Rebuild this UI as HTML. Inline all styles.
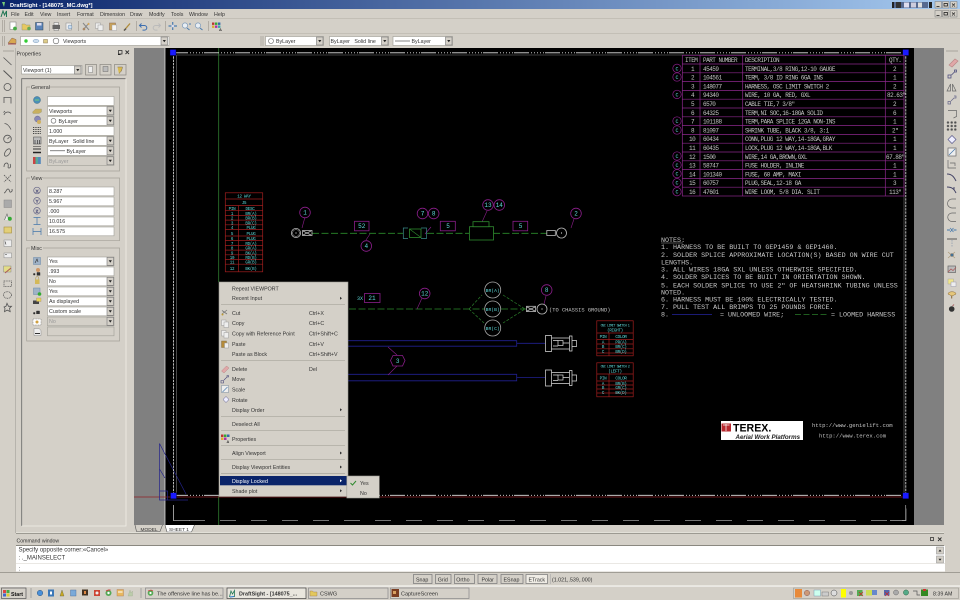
<!DOCTYPE html>
<html><head><meta charset="utf-8"><title>DraftSight</title>
<style>
html,body{margin:0;padding:0;width:960px;height:600px;overflow:hidden;background:#d4d0c8}
svg{position:absolute;left:0;top:0;display:block;filter:blur(.35px)}
text{font-family:"Liberation Sans",sans-serif;font-size:5.3px;fill:#333;white-space:pre}
.b{font-weight:bold}
.t{font-family:"Liberation Mono",monospace;font-size:6px;letter-spacing:-.5px;fill:#c4c4c4}
.n{font-family:"Liberation Mono",monospace;font-size:6.7px;fill:#c8c8c8}
.c{font-family:"Liberation Mono",monospace;font-size:4.2px;letter-spacing:-.25px;fill:#5fd8d8;text-anchor:middle}
.h{font-size:3.5px;letter-spacing:-.5px}
.bn{font-family:"Liberation Mono",monospace;font-size:6px;fill:#5fd8d8;text-anchor:middle}
.dis{fill:#999}
</style></head><body>
<svg width="960" height="600" viewBox="0 0 960 600" xmlns="http://www.w3.org/2000/svg">
<defs>
<linearGradient id="tg" x1="0" x2="1" y1="0" y2="0"><stop offset="0" stop-color="#0a246a"/><stop offset="1" stop-color="#a6caf0"/></linearGradient>
<g id="dd"><rect width="6.5" height="8" fill="#d4d0c8" stroke="#777" stroke-width=".6"/><path d="M1.7 3h3.2L3.3 5.3z" fill="#222"/></g>
<g id="wb"><rect width="6.5" height="6.5" fill="#d4d0c8" stroke="#777" stroke-width=".5"/></g>
<g id="bal"><circle r="5.3" fill="#000" stroke="#8a1e8a" stroke-width=".8"/></g>
<g id="c"><circle r="4.2" fill="none" stroke="#8a1e8a" stroke-width=".7"/><text y="2" class="bn" style="font-size:5px">C</text></g>
</defs>

<!-- base -->
<rect width="960" height="600" fill="#d4d0c8"/>
<!-- title bar -->
<rect width="960" height="9" fill="url(#tg)"/>
<path d="M2 2h3l-1 5z" fill="#7c7"/>
<text x="10" y="6.8" class="b" style="fill:#fff;font-size:5.7px">DraftSight - [148075_MC.dwg*]</text>
<rect x="892" y="2" width="36" height="6" fill="#56698f"/>
<rect x="892" y="2" width="2" height="6" fill="#222"/><rect x="896" y="2" width="5" height="6" fill="#333"/><rect x="904" y="2.5" width="5" height="5" fill="#dde"/><rect x="911" y="2.5" width="5" height="5" fill="#ccd"/><rect x="918" y="2.5" width="4" height="5" fill="#ddd"/><rect x="929" y="2" width="3" height="6" fill="#222"/>
<use href="#wb" x="935" y="1.5"/><use href="#wb" x="942.5" y="1.5"/><use href="#wb" x="950.5" y="1.5"/>
<path d="M936.5 6.5h3M944 3.5h3.5v2.5h-3.5zM952 3.5l3 3M955 3.5l-3 3" stroke="#111" stroke-width=".7" fill="none"/>
<!-- menu -->
<path d="M1 17l2-6 1.5 4 2-4v6" stroke="#275" fill="none"/>
<g style="font-size:5.3px">
<text x="11" y="16">File</text><text x="24.5" y="16">Edit</text><text x="40" y="16">View</text><text x="57" y="16">Insert</text><text x="77" y="16">Format</text><text x="100" y="16">Dimension</text><text x="130" y="16">Draw</text><text x="149" y="16">Modify</text><text x="171" y="16">Tools</text><text x="189" y="16">Window</text><text x="214" y="16">Help</text></g>
<use href="#wb" x="935" y="10.5"/><use href="#wb" x="942.5" y="10.5"/><use href="#wb" x="950.5" y="10.5"/>
<path d="M936.5 15.5h3M944 12.5h3.5v2.5h-3.5zM952 12.5l3 3M955 12.5l-3 3" stroke="#111" stroke-width=".7" fill="none"/>
<path d="M0 18.5H960M0 33.5H960" stroke="#bdb9b0" stroke-width=".7"/>
<!-- toolbar 1 -->
<g stroke="#a8a49b" stroke-width=".8"><path d="M2.5 20v12M4.5 20v12M2.5 36v10M4.5 36v10M49.5 21v10M78.5 21v10M136.5 21v10M165.5 21v10M208.5 21v10M261 36v10M263 36v10"/></g>
<rect x="10" y="22" width="6" height="7.5" fill="#fff" stroke="#888" stroke-width=".6"/><circle cx="15" cy="28.5" r="1.9" fill="#4a4"/>
<path d="M22 24h3l1 1h4v5h-8z" fill="#e6c860" stroke="#997" stroke-width=".5"/><circle cx="29" cy="28.5" r="1.8" fill="#6a5"/>
<rect x="35.5" y="22.5" width="7.5" height="7.5" fill="#5b83b8" stroke="#345" stroke-width=".5"/><rect x="37" y="23" width="4.5" height="2.5" fill="#dde"/>
<rect x="52.5" y="25" width="7.5" height="4" fill="#666"/><rect x="54" y="22.5" width="4.5" height="2.5" fill="#eee" stroke="#555" stroke-width=".4"/><rect x="54" y="29" width="4.5" height="1.5" fill="#fff" stroke="#555" stroke-width=".4"/>
<rect x="66" y="23" width="5.5" height="7" fill="#eee" stroke="#888" stroke-width=".5"/><circle cx="70" cy="27" r="2" fill="#cde" stroke="#68a" stroke-width=".5"/>
<path d="M83 30l6-7M83 23l6 7" stroke="#888"/><circle cx="84" cy="29" r="1.3" fill="#a86"/><circle cx="88.5" cy="24" r="1" fill="#da5"/>
<rect x="95.5" y="23" width="5" height="5.5" fill="#eee" stroke="#999" stroke-width=".5"/><rect x="98" y="25" width="5" height="5.5" fill="#eee" stroke="#999" stroke-width=".5"/>
<rect x="109.5" y="23" width="6" height="7" fill="#c9a35b" stroke="#865" stroke-width=".5"/><rect x="112" y="25" width="4.5" height="5.5" fill="#f4f4f4" stroke="#999" stroke-width=".4"/>
<path d="M124 30.5l6-7" stroke="#b08c3b" stroke-width="1.3"/><path d="M124 30.5l2-1.8" stroke="#555" stroke-width="1.4"/>
<path d="M140 25.5h4.5a2.3 2.3 0 0 1 0 4.6h-2M141.5 23.5l-2 2 2 2" fill="none" stroke="#3d6fb0" stroke-width="1"/>
<path d="M160 25.5h-4.5a2.3 2.3 0 0 0 0 4.6h2M158.5 23.5l2 2-2 2" fill="none" stroke="#bbb" stroke-width="1"/>
<path d="M172.7 22v8M168.5 26h8.5" stroke="#4a7cb0" stroke-width="1.2"/><circle cx="172.7" cy="26" r="1.3" fill="#dde"/>
<circle cx="185" cy="25.5" r="2.6" fill="#e8eef4" stroke="#7b98b8" stroke-width=".7"/><path d="M187 28l2.5 2" stroke="#4a7cb0"/><path d="M189 24h2" stroke="#4a7cb0"/>
<circle cx="198" cy="25.5" r="2.6" fill="#e8eef4" stroke="#7b98b8" stroke-width=".7"/><path d="M200 28l2.5 2" stroke="#4a7cb0"/>
<rect x="212" y="22.5" width="2.4" height="2.4" fill="#b33"/><rect x="215" y="22.5" width="2.4" height="2.4" fill="#3a3"/><rect x="218" y="22.5" width="2.4" height="2.4" fill="#36a"/><rect x="212" y="25.5" width="2.4" height="2.4" fill="#da3"/><rect x="215" y="25.5" width="2.4" height="2.4" fill="#a3a"/><rect x="218" y="25.5" width="2.4" height="2.4" fill="#3aa"/><text x="219" y="31" class="b" style="font-size:4px">A</text>
<!-- toolbar 2 -->
<path d="M8 43l4-5 4 1.5v4z" fill="#d8a850" stroke="#865" stroke-width=".5"/><path d="M8 44h8" stroke="#a55" stroke-width="1"/>
<rect x="20.5" y="36.5" width="148.5" height="9" fill="#fff" stroke="#9a9890" stroke-width=".6"/><use href="#dd" x="161" y="37"/>
<circle cx="26" cy="41" r="1.7" fill="#3c3"/><ellipse cx="36" cy="41" rx="3" ry="1.6" fill="#cde" stroke="#79b" stroke-width=".5"/><rect x="43.5" y="39.5" width="4" height="3.5" fill="#dc8" stroke="#875" stroke-width=".5"/><circle cx="56" cy="41" r="2.8" fill="#fff" stroke="#666" stroke-width=".6"/><text x="63" y="43">Viewports</text>
<rect x="265.5" y="36.5" width="58" height="9" fill="#fff" stroke="#9a9890" stroke-width=".6"/><use href="#dd" x="316.5" y="37"/><circle cx="271" cy="41" r="2.5" fill="#fff" stroke="#666" stroke-width=".6"/><text x="276" y="43">ByLayer</text>
<rect x="329.5" y="36.5" width="59" height="9" fill="#fff" stroke="#9a9890" stroke-width=".6"/><use href="#dd" x="381.5" y="37"/><text x="330.5" y="43">ByLayer   Solid line</text>
<rect x="393" y="36.5" width="59.5" height="9" fill="#fff" stroke="#9a9890" stroke-width=".6"/><use href="#dd" x="445.5" y="37"/><path d="M395 41h15" stroke="#333" stroke-width=".6"/><text x="411.5" y="43">ByLayer</text>

<!-- canvas -->
<rect x="134" y="48" width="810" height="477" fill="#808080"/>
<rect x="165" y="48" width="749" height="477" fill="#000"/>
<path d="M165 48V525" stroke="#eee" stroke-width=".7"/>

<!-- sheet dashed frame -->
<path d="M173.5 505V520.5H906V505" fill="none" stroke="#9a9a9a" stroke-width=".7" stroke-dasharray="16 15"/>
<path d="M173.5 505V520.5H190" fill="none" stroke="#aaa" stroke-width=".7"/><path d="M890 520.5H905.7V505" fill="none" stroke="#aaa" stroke-width=".7"/>
<path d="M176.3 55H904M176.3 55V495M904 55V495" fill="none" stroke="#7a7a7a" stroke-width=".6"/>
<!-- axes -->
<path d="M218.7 48V282M218.7 496V525" stroke="#2f7c2f" stroke-width=".8"/>
<path d="M134 497H349M380 497H905" stroke="#8f2226" stroke-width=".8"/>
<!-- blue triangle -->
<path d="M159.5 443.5L186 494M159.5 443.5V500H188M159.5 469l5.5 9M159.5 491h8v9" fill="none" stroke="#24248c" stroke-width=".7"/>
<!-- viewport border -->
<g fill="none" stroke="#e4e4e4" stroke-width=".8">
<path d="M173.5 53V495" stroke-dasharray="2.4 .9"/>
<path d="M905.8 53V495" stroke-dasharray="2.4 .9"/>
<path d="M173 52.8H906" stroke-dasharray="15 2 1 2 1 2 1 2 1 2 1 1"/>
<path d="M173 495.3H906" stroke-dasharray="15 2 1 2 1 2 1 2 1 2 1 1"/>
</g>
<g fill="#1a1aff" stroke="#000034" stroke-width=".4"><rect x="170" y="49.5" width="6" height="6"/><rect x="902.7" y="49.5" width="6" height="6"/><rect x="170.5" y="492.7" width="6" height="6"/><rect x="902.7" y="492.7" width="6" height="6"/></g>

<!-- BOM table -->
<g fill="none" stroke="#8c288c" stroke-width=".7">
<rect x="682.3" y="55.3" width="221.7" height="140.7"/>
<path d="M700 55.3V196M742.7 55.3V196M885.3 55.3V196"/>
<path d="M682.3 64H904M682.3 72.8H904M682.3 81.6H904M682.3 90.4H904M682.3 99.2H904M682.3 108H904M682.3 116.8H904M682.3 125.6H904M682.3 134.4H904M682.3 143.2H904M682.3 152H904M682.3 160.8H904M682.3 169.6H904M682.3 178.4H904M682.3 187.2H904"/>
</g>
<use href="#c" x="677" y="68.3"/><use href="#c" x="677" y="77"/><use href="#c" x="677" y="94.4"/><use href="#c" x="677" y="121"/><use href="#c" x="677" y="130"/><use href="#c" x="677" y="156"/><use href="#c" x="677" y="165"/><use href="#c" x="677" y="173.7"/><use href="#c" x="677" y="182.7"/><use href="#c" x="677" y="191.7"/>
<g>
<text class="t" x="685" y="62">ITEM</text><text class="t" x="703" y="62">PART NUMBER</text><text class="t" x="745" y="62">DESCRIPTION</text><text class="t" x="889" y="62">QTY.</text>
<text class="t" x="691" y="70.8">1</text><text class="t" x="703" y="70.8">45459</text><text class="t" x="745" y="70.8">TERMINAL,3/8 RING,12-10 GAUGE</text><text class="t" x="893" y="70.8">2</text>
<text class="t" x="691" y="79.6">2</text><text class="t" x="703" y="79.6">104561</text><text class="t" x="745" y="79.6">TERM, 3/8 ID RING 6GA INS</text><text class="t" x="893" y="79.6">1</text>
<text class="t" x="691" y="88.4">3</text><text class="t" x="703" y="88.4">148077</text><text class="t" x="745" y="88.4">HARNESS, OSC LIMIT SWITCH 2</text><text class="t" x="893" y="88.4">2</text>
<text class="t" x="691" y="97.2">4</text><text class="t" x="703" y="97.2">94340</text><text class="t" x="745" y="97.2">WIRE, 10 GA, RED, GXL</text><text class="t" x="887" y="97.2">82.63"</text>
<text class="t" x="691" y="106">5</text><text class="t" x="703" y="106">6570</text><text class="t" x="745" y="106">CABLE TIE,7 3/8"</text><text class="t" x="893" y="106">2</text>
<text class="t" x="691" y="114.8">6</text><text class="t" x="703" y="114.8">64325</text><text class="t" x="745" y="114.8">TERM,NI SOC,16-18GA SOLID</text><text class="t" x="893" y="114.8">6</text>
<text class="t" x="691" y="123.6">7</text><text class="t" x="703" y="123.6">101188</text><text class="t" x="745" y="123.6">TERM,PARA SPLICE 12GA NON-INS</text><text class="t" x="893" y="123.6">1</text>
<text class="t" x="691" y="132.4">8</text><text class="t" x="703" y="132.4">81097</text><text class="t" x="745" y="132.4">SHRINK TUBE, BLACK 3/8, 3:1</text><text class="t" x="892" y="132.4">2"</text>
<text class="t" x="689" y="141.2">10</text><text class="t" x="703" y="141.2">60434</text><text class="t" x="745" y="141.2">CONN,PLUG 12 WAY,14-18GA,GRAY</text><text class="t" x="893" y="141.2">1</text>
<text class="t" x="689" y="150">11</text><text class="t" x="703" y="150">60435</text><text class="t" x="745" y="150">LOCK,PLUG 12 WAY,14-18GA,BLK</text><text class="t" x="893" y="150">1</text>
<text class="t" x="689" y="158.8">12</text><text class="t" x="703" y="158.8">1500</text><text class="t" x="745" y="158.8">WIRE,14 GA,BROWN,GXL</text><text class="t" x="886" y="158.8">67.88"</text>
<text class="t" x="689" y="167.6">13</text><text class="t" x="703" y="167.6">58747</text><text class="t" x="745" y="167.6">FUSE HOLDER, INLINE</text><text class="t" x="893" y="167.6">1</text>
<text class="t" x="689" y="176.4">14</text><text class="t" x="703" y="176.4">101340</text><text class="t" x="745" y="176.4">FUSE, 60 AMP, MAXI</text><text class="t" x="893" y="176.4">1</text>
<text class="t" x="689" y="185.2">15</text><text class="t" x="703" y="185.2">60757</text><text class="t" x="745" y="185.2">PLUG,SEAL,12-18 GA</text><text class="t" x="893" y="185.2">3</text>
<text class="t" x="689" y="194">16</text><text class="t" x="703" y="194">47601</text><text class="t" x="745" y="194">WIRE LOOM, 5/8 DIA. SLIT</text><text class="t" x="889" y="194">113"</text>
</g>

<!-- Notes -->
<text class="n" x="661" y="242">NOTES:</text><path d="M661 243H683" stroke="#ccc" stroke-width=".4"/>
<text class="n" x="661" y="249">1. HARNESS TO BE BUILT TO GEP1459 &amp; GEP1460.</text>
<text class="n" x="661" y="257">2. SOLDER SPLICE APPROXIMATE LOCATION(S) BASED ON WIRE CUT</text>
<text class="n" x="661" y="264.5">LENGTHS.</text>
<text class="n" x="661" y="271.5">3. ALL WIRES 18GA SXL UNLESS OTHERWISE SPECIFIED.</text>
<text class="n" x="661" y="279">4. SOLDER SPLICES TO BE BUILT IN ORIENTATION SHOWN.</text>
<text class="n" x="661" y="287.5">5. EACH SOLDER SPLICE TO USE 2" OF HEATSHRINK TUBING UNLESS</text>
<text class="n" x="661" y="294.5">NOTED.</text>
<text class="n" x="661" y="301.5">6. HARNESS MUST BE 100% ELECTRICALLY TESTED.</text>
<text class="n" x="661" y="309">7. PULL TEST ALL BRIMPS TO 25 POUNDS FORCE.</text>
<text class="n" x="661" y="316.5">8.</text><path d="M672 314.5H712" stroke="#24249c" stroke-width=".8"/>
<text class="n" x="720" y="316.5">= UNLOOMED WIRE;</text><path d="M795 314.5H827" stroke="#2a7c2a" stroke-width=".8" stroke-dasharray="6 2.5"/>
<text class="n" x="831" y="316.5">= LOOMED HARNESS</text>

<!-- Terex -->
<rect x="721" y="421" width="82" height="19" fill="#fff"/>
<rect x="721.5" y="423.5" width="9.5" height="8" fill="#b7282e"/><path d="M723 425h6.5M726 424v7" stroke="#fff" stroke-width=".7"/>
<text x="733" y="431.5" class="b" style="font-size:10.6px;fill:#000">TEREX.</text>
<text x="735.5" y="438.8" class="b" style="font-size:6.2px;fill:#222;font-style:italic">Aerial Work Platforms</text>
<text class="t" x="812" y="427" style="font-size:5.6px;letter-spacing:0">http://www.genielift.com</text>
<text class="t" x="819" y="437.5" style="font-size:5.6px;letter-spacing:0">http://www.terex.com</text>

<!-- J5 table -->
<g fill="none" stroke="#a01e1e" stroke-width=".7">
<rect x="225.3" y="192.8" width="37.4" height="79"/>
<path d="M225.3 199H262.7M225.3 205.5H262.7M225.3 210.7H262.7M225.3 215.4H262.7M225.3 220.1H262.7M225.3 224.8H262.7M225.3 229.5H262.7M225.3 236H262.7M225.3 240.5H262.7M225.3 245.4H262.7M225.3 250.1H262.7M225.3 254.8H262.7M225.3 259.5H262.7M225.3 264.2H262.7M238.5 205.5V271.8"/>
</g>
<text class="c" x="244" y="197.5">12 WAY</text><text class="c" x="244" y="204">J5</text>
<text class="c" x="232" y="210">PIN</text><text class="c" x="250" y="210">DESC</text>
<g>
<text class="c" x="232" y="215">1</text><text class="c" x="251" y="215">BR(A)</text>
<text class="c" x="232" y="219.6">2</text><text class="c" x="251" y="219.6">BR(B)</text>
<text class="c" x="232" y="224.3">3</text><text class="c" x="251" y="224.3">BR(C)</text>
<text class="c" x="232" y="229">4</text><text class="c" x="251" y="229">PLUG</text>
<text class="c" x="232" y="235">5</text><text class="c" x="251" y="235">PLUG</text>
<text class="c" x="232" y="240">6</text><text class="c" x="251" y="240">PLUG</text>
<text class="c" x="232" y="244.8">7</text><text class="c" x="251" y="244.8">RD(A)</text>
<text class="c" x="232" y="249.6">8</text><text class="c" x="251" y="249.6">GR(A)</text>
<text class="c" x="232" y="254.3">9</text><text class="c" x="251" y="254.3">BK(A)</text>
<text class="c" x="232" y="259">10</text><text class="c" x="251" y="259">RD(B)</text>
<text class="c" x="232" y="263.7">11</text><text class="c" x="251" y="263.7">GR(B)</text>
<text class="c" x="232" y="270">12</text><text class="c" x="251" y="270">BK(B)</text>
</g>

<!-- wire 1 -->
<path d="M312 233.3H403M427 233.3H469M493 233.3H547" stroke="#2a8a2a" stroke-width=".8" stroke-dasharray="7 2.5"/>
<g fill="none" stroke="#bbb" stroke-width=".8">
<circle cx="296" cy="233" r="4.6"/><circle cx="296" cy="233" r="3.4" stroke-width=".5"/>
<rect x="302.5" y="230.5" width="9.5" height="5"/><path d="M303 231l8 4M303 235l8-4"/>
<circle cx="561.5" cy="233" r="5"/><rect x="546.8" y="230.5" width="8.5" height="5"/>
</g>
<circle cx="296" cy="233" r=".6" fill="#ddd"/><circle cx="561.5" cy="233" r=".6" fill="#ddd"/>
<path d="M302 228L305 217M431 227l-6 7M571 228l3-9M366 240l4-6M482 222l5-11" stroke="#8a1e8a" stroke-width=".6" fill="none"/>
<g fill="none" stroke="#3a8a8a" stroke-width=".7"><path d="M408 228h-4.7v10.5h4.7M421 228h5.5v10.5h-5.5"/></g>
<rect x="409.5" y="229" width="11.5" height="8.5" fill="none" stroke="#2f8a2f" stroke-width=".8"/><path d="M409.5 229l11.5 8.5" stroke="#2f8a2f" stroke-width=".6"/>
<rect x="469.5" y="226.7" width="24" height="13.3" fill="#000" stroke="#2f8a2f" stroke-width=".8"/>
<rect x="473" y="221.7" width="16" height="5" fill="#000" stroke="#2f8a2f" stroke-width=".8"/>
<g fill="#000" stroke="#8a1e8a" stroke-width=".8">
<rect x="354.5" y="221.3" width="14.5" height="9.5"/><rect x="440.3" y="221.3" width="15" height="9.5"/><rect x="513" y="221.3" width="14.7" height="9.5"/><rect x="364.5" y="293.5" width="15.5" height="9"/></g>
<text class="bn" x="361.7" y="228">52</text><text class="bn" x="448" y="228">5</text><text class="bn" x="520.5" y="228">5</text><text class="bn" x="372" y="300">21</text>
<text class="bn" x="360" y="300" style="font-size:5px">3X</text>
<use href="#bal" x="305" y="212.5"/><use href="#bal" x="366.3" y="246"/><use href="#bal" x="422.5" y="213.5"/><use href="#bal" x="433.7" y="213.5"/><use href="#bal" x="488" y="205"/><use href="#bal" x="499.3" y="205"/><use href="#bal" x="576" y="213.5"/><use href="#bal" x="424.7" y="293.5"/><use href="#bal" x="546.7" y="290"/>
<text class="bn" x="305" y="214.5">1</text><text class="bn" x="366.3" y="248">4</text><text class="bn" x="422.5" y="215.5">7</text><text class="bn" x="433.7" y="215.5">8</text><text class="bn" x="488" y="207">13</text><text class="bn" x="499.3" y="207">14</text><text class="bn" x="576" y="215.5">2</text><text class="bn" x="424.7" y="295.5">12</text><text class="bn" x="546.7" y="292">8</text>

<!-- wire 2 -->
<path d="M349 309H526" stroke="#2a8a2a" stroke-width=".8" stroke-dasharray="7 2.5"/>
<path d="M469 309L482 295M469 309L484 323M503 295L525 309L503 323" stroke="#2a7c2a" stroke-width=".7" stroke-dasharray="3 1.5" fill="none"/>
<path d="M417 309l5-11M544 304l2-8" stroke="#8a1e8a" stroke-width=".6" fill="none"/>
<g fill="#000" stroke="#a8a8a8" stroke-width=".8"><circle cx="492.7" cy="290" r="8"/><circle cx="492.7" cy="309" r="8"/><circle cx="492.7" cy="328" r="8"/></g>
<text class="bn" x="492.7" y="292" style="font-size:4.7px">BR(A)</text><text class="bn" x="492.7" y="311" style="font-size:4.7px">BR(B)</text><text class="bn" x="492.7" y="330" style="font-size:4.7px">BR(C)</text>
<g fill="none" stroke="#bbb" stroke-width=".8"><rect x="526.5" y="306.3" width="9" height="5.3"/><path d="M527 307l8 4M527 311l8-4"/><circle cx="542" cy="309" r="5"/></g>
<circle cx="542" cy="309" r=".6" fill="#ddd"/>
<text class="t" x="549" y="311.5" style="font-size:5.4px;letter-spacing:0">(TO CHASSIS GROUND)</text>

<!-- blue wires -->
<g fill="none" stroke="#20208f" stroke-width=".8">
<path d="M348 340.7H516.7V346.2H348M516.7 343.3H545"/>
<path d="M348 374.3H516.7V380.8H348M516.7 377.5H545"/>
</g>
<path d="M388 347l9 8M388 375l9-9" stroke="#8a1e8a" stroke-width=".6"/>
<path d="M393 355.5h9.5l2.5 5-2.500 5.500h-9.500l-2.500-5.500z" fill="#000" stroke="#8a1e8a" stroke-width=".8"/>
<text class="bn" x="397.7" y="363">3</text>
<!-- connectors -->
<g fill="none" stroke="#ddd" stroke-width=".7">
<g><path d="M545.5 335.5h6v16h-6zM551.5 338h18v11h-18zM569.5 336v15h2.5v-15zM572 340.5h4.500v6h-4.500z"/><rect x="558" y="340.5" width="5" height="5"/><path d="M553 340.5h5M553 346h5M563 343h6"/></g>
<g transform="translate(0,34.5)"><path d="M545.5 335.5h6v16h-6zM551.5 338h18v11h-18zM569.5 336v15h2.5v-15zM572 340.5h4.500v6h-4.500z"/><rect x="558" y="340.5" width="5" height="5"/><path d="M553 340.5h5M553 346h5M563 343h6"/></g>
</g>
<!-- small red tables -->
<g fill="none" stroke="#a01e1e" stroke-width=".7">
<rect x="596.8" y="320.8" width="36.4" height="35"/><path d="M596.8 333H633.2M596.8 339.5H633.2M596.8 344H633.2M596.8 348.8H633.2M596.8 353H633.2M609 333V355.8"/>
<rect x="596.8" y="362.8" width="36.4" height="34"/><path d="M596.8 374H633.2M596.8 381H633.2M596.8 385H633.2M596.8 389H633.2M596.8 393H633.2M609 374V396.8"/>
</g>
<text class="c h" x="615" y="326.5">OSC LIMIT SWITCH 1</text><text class="c" x="615" y="331.5">(RIGHT)</text><text class="c" x="603" y="338">PIN</text><text class="c" x="621" y="338">COLOR</text><text class="c" x="603" y="343.5">A</text><text class="c" x="621" y="343.5">PR(A)</text><text class="c" x="603" y="348">B</text><text class="c" x="621" y="348">BR(C)</text><text class="c" x="603" y="353">C</text><text class="c" x="621" y="353">BR(D)</text>
<text class="c h" x="615" y="367.5">OSC LIMIT SWITCH 2</text><text class="c" x="615" y="372.5">(LEFT)</text><text class="c" x="603" y="379.5">PIN</text><text class="c" x="621" y="379.5">COLOR</text><text class="c" x="603" y="385">A</text><text class="c" x="621" y="385">BR(B)</text><text class="c" x="603" y="389">B</text><text class="c" x="621" y="389">GR(C)</text><text class="c" x="603" y="394">C</text><text class="c" x="621" y="394">BK(D)</text>

<!-- tabs -->
<rect x="134" y="525" width="810" height="8" fill="#d4d0c8"/>
<path d="M135 525l1.5 6.5H160l2.5-6.5" fill="#d4d0c8" stroke="#555" stroke-width=".6"/>
<path d="M165 525l2 7H191.5l3-7" fill="#fff" stroke="#555" stroke-width=".6"/>
<text x="140.5" y="531" style="font-size:4.8px">MODEL</text><text x="169" y="531" style="font-size:4.8px">SHEET 1</text>

<!-- left toolbar -->
<path d="M15.5 48V533" stroke="#aaa7a0" stroke-width=".7"/><path d="M3 51h11" stroke="#a8a49b" stroke-width="1"/>
<g fill="none" stroke="#555" stroke-width=".8">
<path d="M3.5 57.5L11.5 65"/><path d="M3.5 70.5L12 78.5" stroke-width="1"/><circle cx="7.5" cy="87" r="3.5"/><path d="M3.5 97.5h7.5v6M4 103v-5.5"/><path d="M4 115a4 4 0 0 1 7-1.5M5 111l-1.5 1.5"/><path d="M4.5 123.5c3 0 5 3 6.5 6"/><circle cx="7.5" cy="139" r="3.8"/><path d="M7.5 139l2-2"/><ellipse cx="7.5" cy="152.5" rx="2.3" ry="4.2" transform="rotate(35 7.5 152.5)"/><path d="M4 167c0-4 3-5 4-3 1 2-1 4 1 4s2-3 1-4"/><path d="M4 175l7 7M11 175l-7 7" stroke-dasharray="1.5 .8"/><path d="M4 193c2 0 2-4 4-4s1 4 3 3 1-2 1-3"/>
<rect x="4" y="281" width="7.5" height="5.5" stroke-dasharray="1 .7"/><ellipse cx="7.5" cy="295" rx="4" ry="3.3" stroke-dasharray="1 .7"/><path d="M4 307l2-.7 1-3 1.5 3h3l-2 2 .7 3.3-3-1.5-2.7 1.5.5-3.3z"/>
</g>
<rect x="4" y="200" width="7.5" height="7.5" fill="#aaa" stroke="#888" stroke-width=".5"/>
<path d="M4.5 220l2.5-6 2 6" fill="#eee" stroke="#666" stroke-width=".6"/><circle cx="9.8" cy="218.8" r="2" fill="#3a3"/>
<rect x="4" y="227" width="7.5" height="6" fill="#e3cf77" stroke="#a78e3e" stroke-width=".6"/>
<rect x="4" y="240" width="7.5" height="6.5" fill="#eee" stroke="#888" stroke-width=".5"/><rect x="4" y="253" width="7.5" height="4.8" fill="#eee" stroke="#888" stroke-width=".5"/><path d="M5 241.5l1 3M5 254.5h2" stroke="#333" stroke-width=".6"/>
<rect x="3.5" y="266" width="7.5" height="6" fill="#e3dc87" stroke="#888" stroke-width=".5"/><path d="M5 273l6-5" stroke="#a55" stroke-width=".9"/>

<!-- right toolbar -->
<path d="M946 51h12" stroke="#a8a49b" stroke-width="1"/>
<g fill="none" stroke="#666" stroke-width=".7">
<path d="M949 65l6-6 3 2-6 6z" fill="#e0a8a8" stroke="#b88"/>
<path d="M948 78h3v-3h-3zM951.5 75l3-3h2v-2h-2v2" stroke="#447"/>
<path d="M947 91l3.5-7v7zM952.5 91V84l3.5 7z"/>
<path d="M948 104h2.5v-2.5H948zM951 101l3-3h2v-2h-2" stroke="#668"/>
<path d="M948 110.5h8.5v6l-3 1.5"/>
<circle cx="948" cy="122.5" r=".9" fill="#444"/><circle cx="951.7" cy="122.5" r=".9" fill="#444"/><circle cx="955.3" cy="122.5" r=".9" fill="#444"/><circle cx="948" cy="126" r=".9" fill="#444"/><circle cx="951.7" cy="126" r=".9" fill="#444"/><circle cx="955.3" cy="126" r=".9" fill="#444"/><circle cx="948" cy="129.5" r=".9" fill="#444"/><circle cx="951.7" cy="129.5" r=".9" fill="#444"/><circle cx="955.3" cy="129.5" r=".9" fill="#444"/>
<path d="M952 135.5l4 4-4 4-4-4z" fill="#eef" stroke="#558"/>
<rect x="948" y="148" width="8" height="8" fill="#eee"/><path d="M949 155l6-6" stroke="#47a"/>
<path d="M948 160v8h8M950 163h5v3"/>
<path d="M947 174c5 0 7 3 9 7" stroke="#446" stroke-width="1"/><path d="M947 187c5 0 7 2 9 6M954 187v3" stroke="#446" stroke-width="1"/>
<path d="M956 199h-4a4.5 4.5 0 0 0 0 9h4"/><path d="M956 213h-4a4 4 0 0 0 0 8.5h4"/>
<path d="M947 230h3M953.5 230h3" stroke="#47a" stroke-width="1.1"/><path d="M950 228l2 2-2 2M953.5 228l-2 2 2 2" stroke="#47a"/>
<path d="M947 239h10" stroke="#222"/><path d="M952 240v7" stroke="#89a" stroke-dasharray="1.5 1"/>
<path d="M948 252l7 6M955 252l-7 6" stroke="#a97"/><circle cx="952" cy="255" r="1.3" fill="#37a"/>
<rect x="948" y="266" width="7.5" height="6.5" fill="#bbb"/><path d="M948 272l3-3 2 1.5 3-3" stroke="#a55"/>
</g>
<rect x="948" y="279" width="5.5" height="5" fill="#f0e58a" stroke="#aa9" stroke-width=".5"/><rect x="951" y="282" width="5" height="4.5" fill="#eee" stroke="#99a" stroke-width=".5"/>
<path d="M948 294c0-3 8-3 8 0l-4 2z" fill="#e5c77b" stroke="#863" stroke-width=".5"/><path d="M951.7 296v2.5" stroke="#863"/>
<circle cx="951.7" cy="309" r="2.8" fill="#333"/><path d="M952.5 306l1.5-1.5" stroke="#a66"/>

<!-- Properties panel -->
<text x="16.5" y="55.5" style="font-size:5.4px">Properties</text>
<rect x="118.5" y="50.5" width="3.5" height="3.5" fill="none" stroke="#222" stroke-width=".7"/><path d="M118 54.500h2.500" stroke="#222"/>
<path d="M125.5 50.5l3.500 3.500M129 50.5l-3.500 3.500" stroke="#333" stroke-width=".9"/>
<rect x="21.5" y="65.5" width="60.5" height="8.500" fill="#fff" stroke="#9a9890" stroke-width=".6"/><use href="#dd" x="74.5" y="66"/><text x="23" y="71.8">Viewport (1)</text>
<g fill="#d4d0c8" stroke="#8a8880" stroke-width=".7"><rect x="85.5" y="64.5" width="11" height="10.5"/><rect x="100" y="64.5" width="11" height="10.5"/><rect x="114.5" y="64.5" width="11.5" height="10.5"/></g>
<rect x="88.5" y="66.5" width="4" height="6" fill="#eee" stroke="#666" stroke-width=".4"/><rect x="103" y="66.5" width="5" height="5" fill="#bbb" stroke="#555" stroke-width=".4"/><path d="M117.5 67h5l-1 4-1 .8-1.5 2" fill="#d8ba50" stroke="#765" stroke-width=".5"/>
<!-- inner frame -->
<path d="M21.7 526V78.7H125.5" fill="none" stroke="#666" stroke-width=".8"/>
<path d="M21.7 526H126V78.7" fill="none" stroke="#f1efe8" stroke-width=".8"/>
<!-- groups -->
<g fill="none" stroke="#a3a097" stroke-width=".7">
<path d="M30 87H26.7V171H119.5V87H49"/>
<path d="M30 178H26.7V240.7H119.5V178H43"/>
<path d="M30 248H26.7V341H119.5V248H43"/>
</g>
<text x="31" y="89">General</text><text x="31" y="180">View</text><text x="31" y="250">Misc</text>

<!-- fields -->
<g fill="#fff" stroke="#a09e96" stroke-width=".6">
<rect x="47.5" y="96.5" width="66.5" height="8.8"/><rect x="47.5" y="106.5" width="66.5" height="8.8"/><rect x="47.5" y="116.5" width="66.5" height="8.8"/><rect x="47.5" y="126.5" width="66.5" height="8.8"/><rect x="47.5" y="136.5" width="66.5" height="8.8"/><rect x="47.5" y="146.5" width="66.5" height="8.8"/>
<rect x="47.5" y="187" width="66.5" height="8.8"/><rect x="47.5" y="197" width="66.5" height="8.8"/><rect x="47.5" y="207" width="66.5" height="8.8"/><rect x="47.5" y="217" width="66.5" height="8.8"/><rect x="47.5" y="227" width="66.5" height="8.8"/>
<rect x="47.5" y="257" width="66.5" height="8.8"/><rect x="47.5" y="267" width="66.5" height="8.8"/><rect x="47.5" y="277" width="66.5" height="8.8"/><rect x="47.5" y="287" width="66.5" height="8.8"/><rect x="47.5" y="297" width="66.5" height="8.8"/><rect x="47.5" y="307" width="66.5" height="8.8"/>
</g>
<rect x="47.5" y="156.5" width="66.5" height="8.8" fill="#d4d0c8" stroke="#a09e96" stroke-width=".6"/>
<rect x="47.5" y="317" width="66.5" height="8.8" fill="#d4d0c8" stroke="#a09e96" stroke-width=".6"/>
<rect x="47.5" y="327" width="66.5" height="8.8" fill="#d4d0c8" stroke="#a09e96" stroke-width=".6"/>
<use href="#dd" x="107" y="106.8"/><use href="#dd" x="107" y="116.8"/><use href="#dd" x="107" y="136.8"/><use href="#dd" x="107" y="146.8"/><use href="#dd" x="107" y="156.8"/>
<use href="#dd" x="107" y="257.3"/><use href="#dd" x="107" y="277.3"/><use href="#dd" x="107" y="287.3"/><use href="#dd" x="107" y="297.3"/><use href="#dd" x="107" y="307.3"/><use href="#dd" x="107" y="317.3"/>
<text x="49" y="112.8">Viewports</text><circle cx="53.5" cy="120.8" r="2.4" fill="#fff" stroke="#666" stroke-width=".6"/><text x="58.5" y="122.8">ByLayer</text><text x="49" y="132.8">1.000</text><text x="49" y="142.8">ByLayer   Solid line</text><path d="M50 150.8h15" stroke="#333" stroke-width=".6"/><text x="66.5" y="152.8">ByLayer</text><text x="49" y="162.8" class="dis">ByLayer</text>
<text x="49" y="193.2">8.287</text><text x="49" y="203.2">5.967</text><text x="49" y="213.2">.000</text><text x="49" y="223.2">10.016</text><text x="49" y="233.2">16.575</text>
<text x="49" y="263.2">Yes</text><text x="49" y="273.2">.993</text><text x="49" y="283.2">No</text><text x="49" y="293.2">Yes</text><text x="49" y="303.2">As displayed</text><text x="49" y="313.2">Custom scale</text><text x="49" y="323.2" class="dis">No</text>
<!-- property icons -->
<circle cx="37" cy="100" r="3.5" fill="#4a8fb8" stroke="#2a5a78" stroke-width=".4"/><path d="M35 100h4" stroke="#7c7"/>
<path d="M32.5 112l3-3h6v3l-2.5 1.5h-6z" fill="#c8b060" stroke="#997" stroke-width=".4"/>
<circle cx="37.5" cy="119" r="3" fill="#8888b8" stroke="#557" stroke-width=".4"/><circle cx="39" cy="122" r="2" fill="#d0b060"/>
<path d="M33 127.5h8M33 129.5h8M33 131.5h8M33 133.5h8" stroke="#444" stroke-dasharray="1 .7" stroke-width=".9"/>
<rect x="33.5" y="137" width="7.5" height="7" fill="#bbb" stroke="#444" stroke-width=".5"/><path d="M35 144v-4M37.5 144v-4M39.5 144v-4" stroke="#222" stroke-width=".6"/>
<path d="M33 146.5h8" stroke="#222" stroke-width=".5"/><path d="M33 149h8" stroke="#222" stroke-width=".9"/><path d="M33 152.5h8" stroke="#222" stroke-width="1.5"/>
<rect x="33" y="157" width="2.5" height="7" fill="#c44"/><rect x="35.5" y="157" width="2.5" height="7" fill="#5a9"/><rect x="38" y="157" width="2.8" height="7" fill="#58b"/>
<g fill="none" stroke="#668" stroke-width=".7">
<circle cx="37" cy="190.5" r="3.3"/><circle cx="37" cy="200.8" r="3.3"/><circle cx="37" cy="210.8" r="3.3"/><path d="M33.5 217.5h7M37 217.5v7M33.5 224.5h7" stroke="#47a"/><path d="M33 228v7M41 228v7M33 231.5h8" stroke="#47a"/><text x="35.8" y="192.3" style="font-size:4px">X</text><text x="35.8" y="202.5" style="font-size:4px">Y</text><text x="35.8" y="212.5" style="font-size:4px">Z</text>
</g>
<rect x="33.5" y="257.5" width="7" height="7" fill="#9fb2c7" stroke="#68a" stroke-width=".5"/><path d="M35 263l2-4 1 3" stroke="#333" stroke-width=".6" fill="none"/>
<circle cx="38" cy="270" r="2" fill="#d09868"/><path d="M33.5 275h1.5v-1.5h-1.5zM37 275.5v-3h3v3" fill="#333" stroke="#222" stroke-width=".4"/>
<rect x="35" y="279.5" width="4.5" height="4.5" fill="#d4b958"/><path d="M35.8 279.5v-1.5a1.5 1.5 0 0 1 3 0v1.5" fill="none" stroke="#a89040" stroke-width=".5"/>
<rect x="33.5" y="288" width="6.5" height="6.5" fill="#9fb2c7" stroke="#68a" stroke-width=".5"/><circle cx="39.5" cy="294" r="1.8" fill="#3a3"/>
<rect x="33" y="300.5" width="6" height="3.5" fill="#444"/><rect x="36.5" y="298" width="4.5" height="3.5" fill="#e8d65a" stroke="#976" stroke-width=".3"/>
<path d="M33.5 314h1.5v-1.5h-1.5zM36.5 314v-3h3v3" fill="#333" stroke="#222" stroke-width=".4"/>
<rect x="33" y="319" width="8" height="6" fill="#fff" stroke="#555" stroke-width=".4" stroke-dasharray="1 .6"/><circle cx="37" cy="322" r="1.5" fill="#d0a040"/>
<path d="M34 328.5h5l2 2v5h-7z" fill="#eee" stroke="#777" stroke-width=".4"/><path d="M35 333.5h5" stroke="#333"/>

<!-- context menu -->
<rect x="219" y="282" width="129" height="214.5" fill="#d4d0c8" stroke="#9c9a92" stroke-width=".6"/>
<rect x="220" y="476" width="126.5" height="9.3" fill="#0a246a"/>
<g stroke="#a8a59c" stroke-width=".7"><path d="M221 304.3H345M221 360.3H345M221 416.3H345M221 430.3H345M221 445.3H345M221 459.3H345M221 473.5H345"/></g>
<g style="font-size:5.3px">
<text x="232" y="290.7">Repeat VIEWPORT</text><text x="232" y="300">Recent Input</text>
<text x="232" y="314.8">Cut</text><text x="309" y="314.8">Ctrl+X</text>
<text x="232" y="325">Copy</text><text x="309" y="325">Ctrl+C</text>
<text x="232" y="335.3">Copy with Reference Point</text><text x="309" y="335.3">Ctrl+Shift+C</text>
<text x="232" y="346">Paste</text><text x="309" y="346">Ctrl+V</text>
<text x="232" y="356">Paste as Block</text><text x="309" y="356">Ctrl+Shift+V</text>
<text x="232" y="370.8">Delete</text><text x="309" y="370.8">Del</text>
<text x="232" y="381">Move</text><text x="232" y="391.3">Scale</text><text x="232" y="402">Rotate</text><text x="232" y="412">Display Order</text>
<text x="232" y="426">Deselect All</text><text x="232" y="440.8">Properties</text><text x="232" y="455">Align Viewport</text><text x="232" y="469">Display Viewport Entities</text>
<text x="232" y="483" style="fill:#fff">Display Locked</text><text x="232" y="492.8">Shade plot</text>
</g>
<g fill="#333"><path d="M340 296.7l2 1.5-2 1.5zM340 408.3l2 1.5-2 1.5zM340 451.5l2 1.5-2 1.5zM340 465.5l2 1.5-2 1.5zM340 489.3l2 1.5-2 1.5z"/></g>
<path d="M340 479.3l2 1.5-2 1.5z" fill="#fff"/>
<!-- menu icons -->
<path d="M222 314l5-4M222 310.5l5 3.5" stroke="#777" fill="none" stroke-width=".8"/><circle cx="222.5" cy="314.5" r="1" fill="#b93"/>
<rect x="221.5" y="320" width="4.5" height="5.5" fill="#eee" stroke="#999" stroke-width=".5"/><rect x="224" y="322" width="4.5" height="5.5" fill="#eee" stroke="#999" stroke-width=".5"/>
<rect x="221.5" y="330.5" width="4.5" height="5.5" fill="#eee" stroke="#999" stroke-width=".5"/><rect x="224" y="332.5" width="4.5" height="5.5" fill="#eee" stroke="#999" stroke-width=".5"/>
<rect x="221.5" y="341" width="5" height="6.5" fill="#b58b3a" stroke="#764" stroke-width=".4"/><rect x="224.5" y="343" width="4" height="5" fill="#eee" stroke="#888" stroke-width=".4"/>
<path d="M221.5 371l5-5 2.5 2-5 5z" fill="#e0a8a8" stroke="#b88" stroke-width=".5"/>
<path d="M221 383h2.5v-2.5H221zM224 380l3-3h1.5v-1.5H227v1.5" fill="none" stroke="#447" stroke-width=".6"/>
<rect x="221.5" y="385.5" width="7" height="7" fill="#eee" stroke="#789" stroke-width=".5"/><path d="M222.5 392l5-5" stroke="#47a" stroke-width=".6"/>
<path d="M226 396.5l3 3-3 3-3-3z" fill="#eef" stroke="#558" stroke-width=".5"/>
<rect x="221" y="434.5" width="2.5" height="2.5" fill="#b33"/><rect x="224" y="434.5" width="2.5" height="2.5" fill="#3a3"/><rect x="227" y="434.5" width="2.5" height="2.5" fill="#36a"/><rect x="221" y="437.5" width="2.5" height="2.5" fill="#da3"/><rect x="224" y="437.5" width="2.5" height="2.5" fill="#a3a"/><text x="226.5" y="443" class="b" style="font-size:3.8px">A</text>
<!-- submenu -->
<rect x="346.8" y="476" width="32.5" height="22" fill="#d4d0c8" stroke="#9c9a92" stroke-width=".6"/>
<path d="M350.5 483l2 2 3.5-4" fill="none" stroke="#2f8a2f" stroke-width="1"/>
<text x="360" y="485">Yes</text><text x="360" y="495">No</text>

<!-- command window -->
<path d="M16 533.5H944" stroke="#8a8880" stroke-width=".8"/><path d="M16 532.5H944" stroke="#f1efe8" stroke-width=".5"/>
<path d="M16 545.5H944" stroke="#8a8880" stroke-width=".9"/>
<text x="16.5" y="542.5" style="font-size:5.2px">Command window</text>
<rect x="930.5" y="537.5" width="3" height="3" fill="none" stroke="#222" stroke-width=".7"/><path d="M938 537.5l3.5 3.5M941.5 537.5l-3.5 3.5" stroke="#333" stroke-width=".9"/>
<rect x="16" y="546" width="929" height="25.5" fill="#fff"/>
<path d="M16 563.3H945" stroke="#d4d0c8" stroke-width=".5"/>
<text x="18.5" y="551.5" style="font-size:6px;fill:#333">Specify opposite corner:«Cancel»</text>
<text x="18.5" y="559.5" style="font-size:6px;fill:#333">: ._MAINSELECT</text>
<text x="18.5" y="570.5" style="font-size:6px;fill:#333">:</text>
<rect x="936.5" y="547" width="7" height="7" fill="#d4d0c8" stroke="#888" stroke-width=".5"/><rect x="936.5" y="556" width="7" height="7" fill="#d4d0c8" stroke="#888" stroke-width=".5"/>
<path d="M938.5 551.5h3l-1.5-2zM938.5 558.7h3l-1.5 2z" fill="#222"/>

<!-- status bar -->
<path d="M0 572.5H960" stroke="#8f8d85" stroke-width=".7"/>
<path d="M0 585.5H960" stroke="#f1efe8" stroke-width=".7"/>
<g fill="#d4d0c8" stroke="#777" stroke-width=".7">
<rect x="413.5" y="574.5" width="18.5" height="9"/><rect x="435.5" y="574.5" width="15.5" height="9"/><rect x="454.5" y="574.5" width="20" height="9"/><rect x="478" y="574.5" width="19" height="9"/><rect x="501" y="574.5" width="22" height="9"/></g>
<rect x="526" y="574.5" width="21.5" height="9" fill="#efece5" stroke="#777" stroke-width=".7"/>
<path d="M550.5 574v10" stroke="#aaa" stroke-width=".6"/>
<g style="font-size:5px"><text x="416" y="581.3">Snap</text><text x="437.8" y="581.3">Grid</text><text x="456.3" y="581.3">Ortho</text><text x="481.5" y="581.3">Polar</text><text x="503.5" y="581.3">ESnap</text><text x="528.5" y="581.3">ETrack</text><text x="552" y="581.3">(1.021,.539,.000)</text></g>

<!-- taskbar -->
<path d="M0 586.5H960" stroke="#fff" stroke-width=".5"/>
<rect x="1.5" y="588" width="24.5" height="10.5" fill="#d4d0c8" stroke="#555" stroke-width=".7"/>
<rect x="3" y="590" width="3" height="3" fill="#d44"/><rect x="6.5" y="590" width="3" height="3" fill="#4a4"/><rect x="3" y="593.5" width="3" height="3" fill="#46c"/><rect x="6.5" y="593.5" width="3" height="3" fill="#dc3"/>
<text x="11" y="596" class="b" style="font-size:5.3px;fill:#111">Start</text>
<path d="M31 588v10M141 588v10" stroke="#999" stroke-width=".8"/>
<circle cx="40" cy="593" r="2.8" fill="#4a90d9" stroke="#246" stroke-width=".4"/><rect x="48" y="589.5" width="6" height="7" fill="#3c78b8"/><rect x="50" y="591.5" width="2" height="3" fill="#fff"/>
<path d="M60 596l2-6 2 6z" fill="#c8a820" stroke="#664" stroke-width=".4"/><rect x="70.5" y="590" width="5.5" height="6" fill="#7aa9d8" stroke="#469" stroke-width=".4"/>
<rect x="82" y="589.5" width="6" height="6" fill="#432"/><rect x="84" y="591" width="2" height="3" fill="#d84"/>
<rect x="94" y="590" width="6" height="6" fill="#c43"/><circle cx="97" cy="593" r="1.5" fill="#eee"/>
<circle cx="108.5" cy="593" r="3" fill="#5a5"/><circle cx="108.5" cy="593" r="1.2" fill="#fff"/><path d="M106 591l2.5-1 2 0" stroke="#c44"/>
<rect x="117" y="589.5" width="6.5" height="6.5" fill="#e8b860" stroke="#a75" stroke-width=".4"/><path d="M118 592h4.5" stroke="#fff"/>
<path d="M128 596l2-6 1 3 1.5-2v5z" fill="#bca" stroke="#9a8" stroke-width=".3"/>
<g fill="#d4d0c8" stroke="#888" stroke-width=".7"><rect x="145.5" y="588" width="77.5" height="10.5"/><rect x="308.5" y="588" width="79.5" height="10.5"/><rect x="390.5" y="588" width="78.5" height="10.5"/></g>
<rect x="227" y="588" width="79" height="10.5" fill="#e9e6de" stroke="#444" stroke-width=".7"/>
<circle cx="150.5" cy="593" r="2.8" fill="#5a5"/><circle cx="150.5" cy="593" r="1.1" fill="#fff"/><path d="M148 591l3-1 2 1" stroke="#c44" stroke-width=".8" fill="none"/>
<text x="157" y="595.5" style="font-size:5.5px">The offensive line has be...</text>
<path d="M229.5 597l1.5-6 1.5 3 2-3.500v6.500" fill="none" stroke="#275" stroke-width=".8"/><path d="M230 597l4-.5" stroke="#27c"/>
<text x="239" y="595.5" class="b" style="font-size:5.4px">DraftSight - [148075_...</text>
<path d="M310 596v-5h2.5l1 1h3.5v4z" fill="#e3c85c" stroke="#975" stroke-width=".4"/>
<text x="320" y="595.5" style="font-size:5.5px">CSWG</text>
<rect x="391.5" y="589" width="7.5" height="8" fill="#7a3c20"/><rect x="393" y="591" width="3" height="3" fill="#d8a060"/>
<text x="401" y="595.5" style="font-size:5.5px">CaptureScreen</text>
<rect x="793.5" y="588" width="165" height="10.5" fill="#d4d0c8" stroke="#9c9a92" stroke-width=".6"/>
<rect x="795" y="589" width="7" height="8.5" fill="#e88a3a"/>
<circle cx="807" cy="593" r="2.7" fill="#c97" stroke="#744" stroke-width=".4"/>
<rect x="814" y="590" width="6.5" height="6" fill="#cfe" stroke="#68a" stroke-width=".4"/>
<rect x="822" y="592" width="6.5" height="4" fill="#ccc" stroke="#666" stroke-width=".4"/>
<circle cx="834" cy="593" r="3" fill="#ddd" stroke="#444" stroke-width=".5"/>
<rect x="841" y="589" width="5" height="8.5" fill="#ff0"/>
<circle cx="851" cy="593" r="2" fill="#999"/>
<rect x="857" y="590" width="5.5" height="6" fill="#5a5"/><path d="M859 596l4-4M863 596l-4-4" stroke="#c22" stroke-width=".6"/>
<rect x="866" y="590" width="6" height="5.5" fill="#cd5"/>
<rect x="872" y="590" width="5" height="5" fill="#68c"/>
<rect x="884" y="590" width="5.5" height="5.5" fill="#56a"/><path d="M885 596l4-4M889 596l-4-4" stroke="#c22" stroke-width=".6"/>
<circle cx="896" cy="592.5" r="2.5" fill="#aaa" stroke="#555" stroke-width=".4"/>
<circle cx="906" cy="592.5" r="2.6" fill="#5a8" stroke="#253" stroke-width=".4"/>
<path d="M913 591h4v4h3" fill="none" stroke="#555" stroke-width=".7"/>
<rect x="921" y="589.5" width="7" height="6.5" fill="#382"/><rect x="923" y="589" width="3" height="2" fill="#c33"/>
<text x="933" y="595.5" style="font-size:5.3px">8:39 AM</text>
</svg>
</body></html>
